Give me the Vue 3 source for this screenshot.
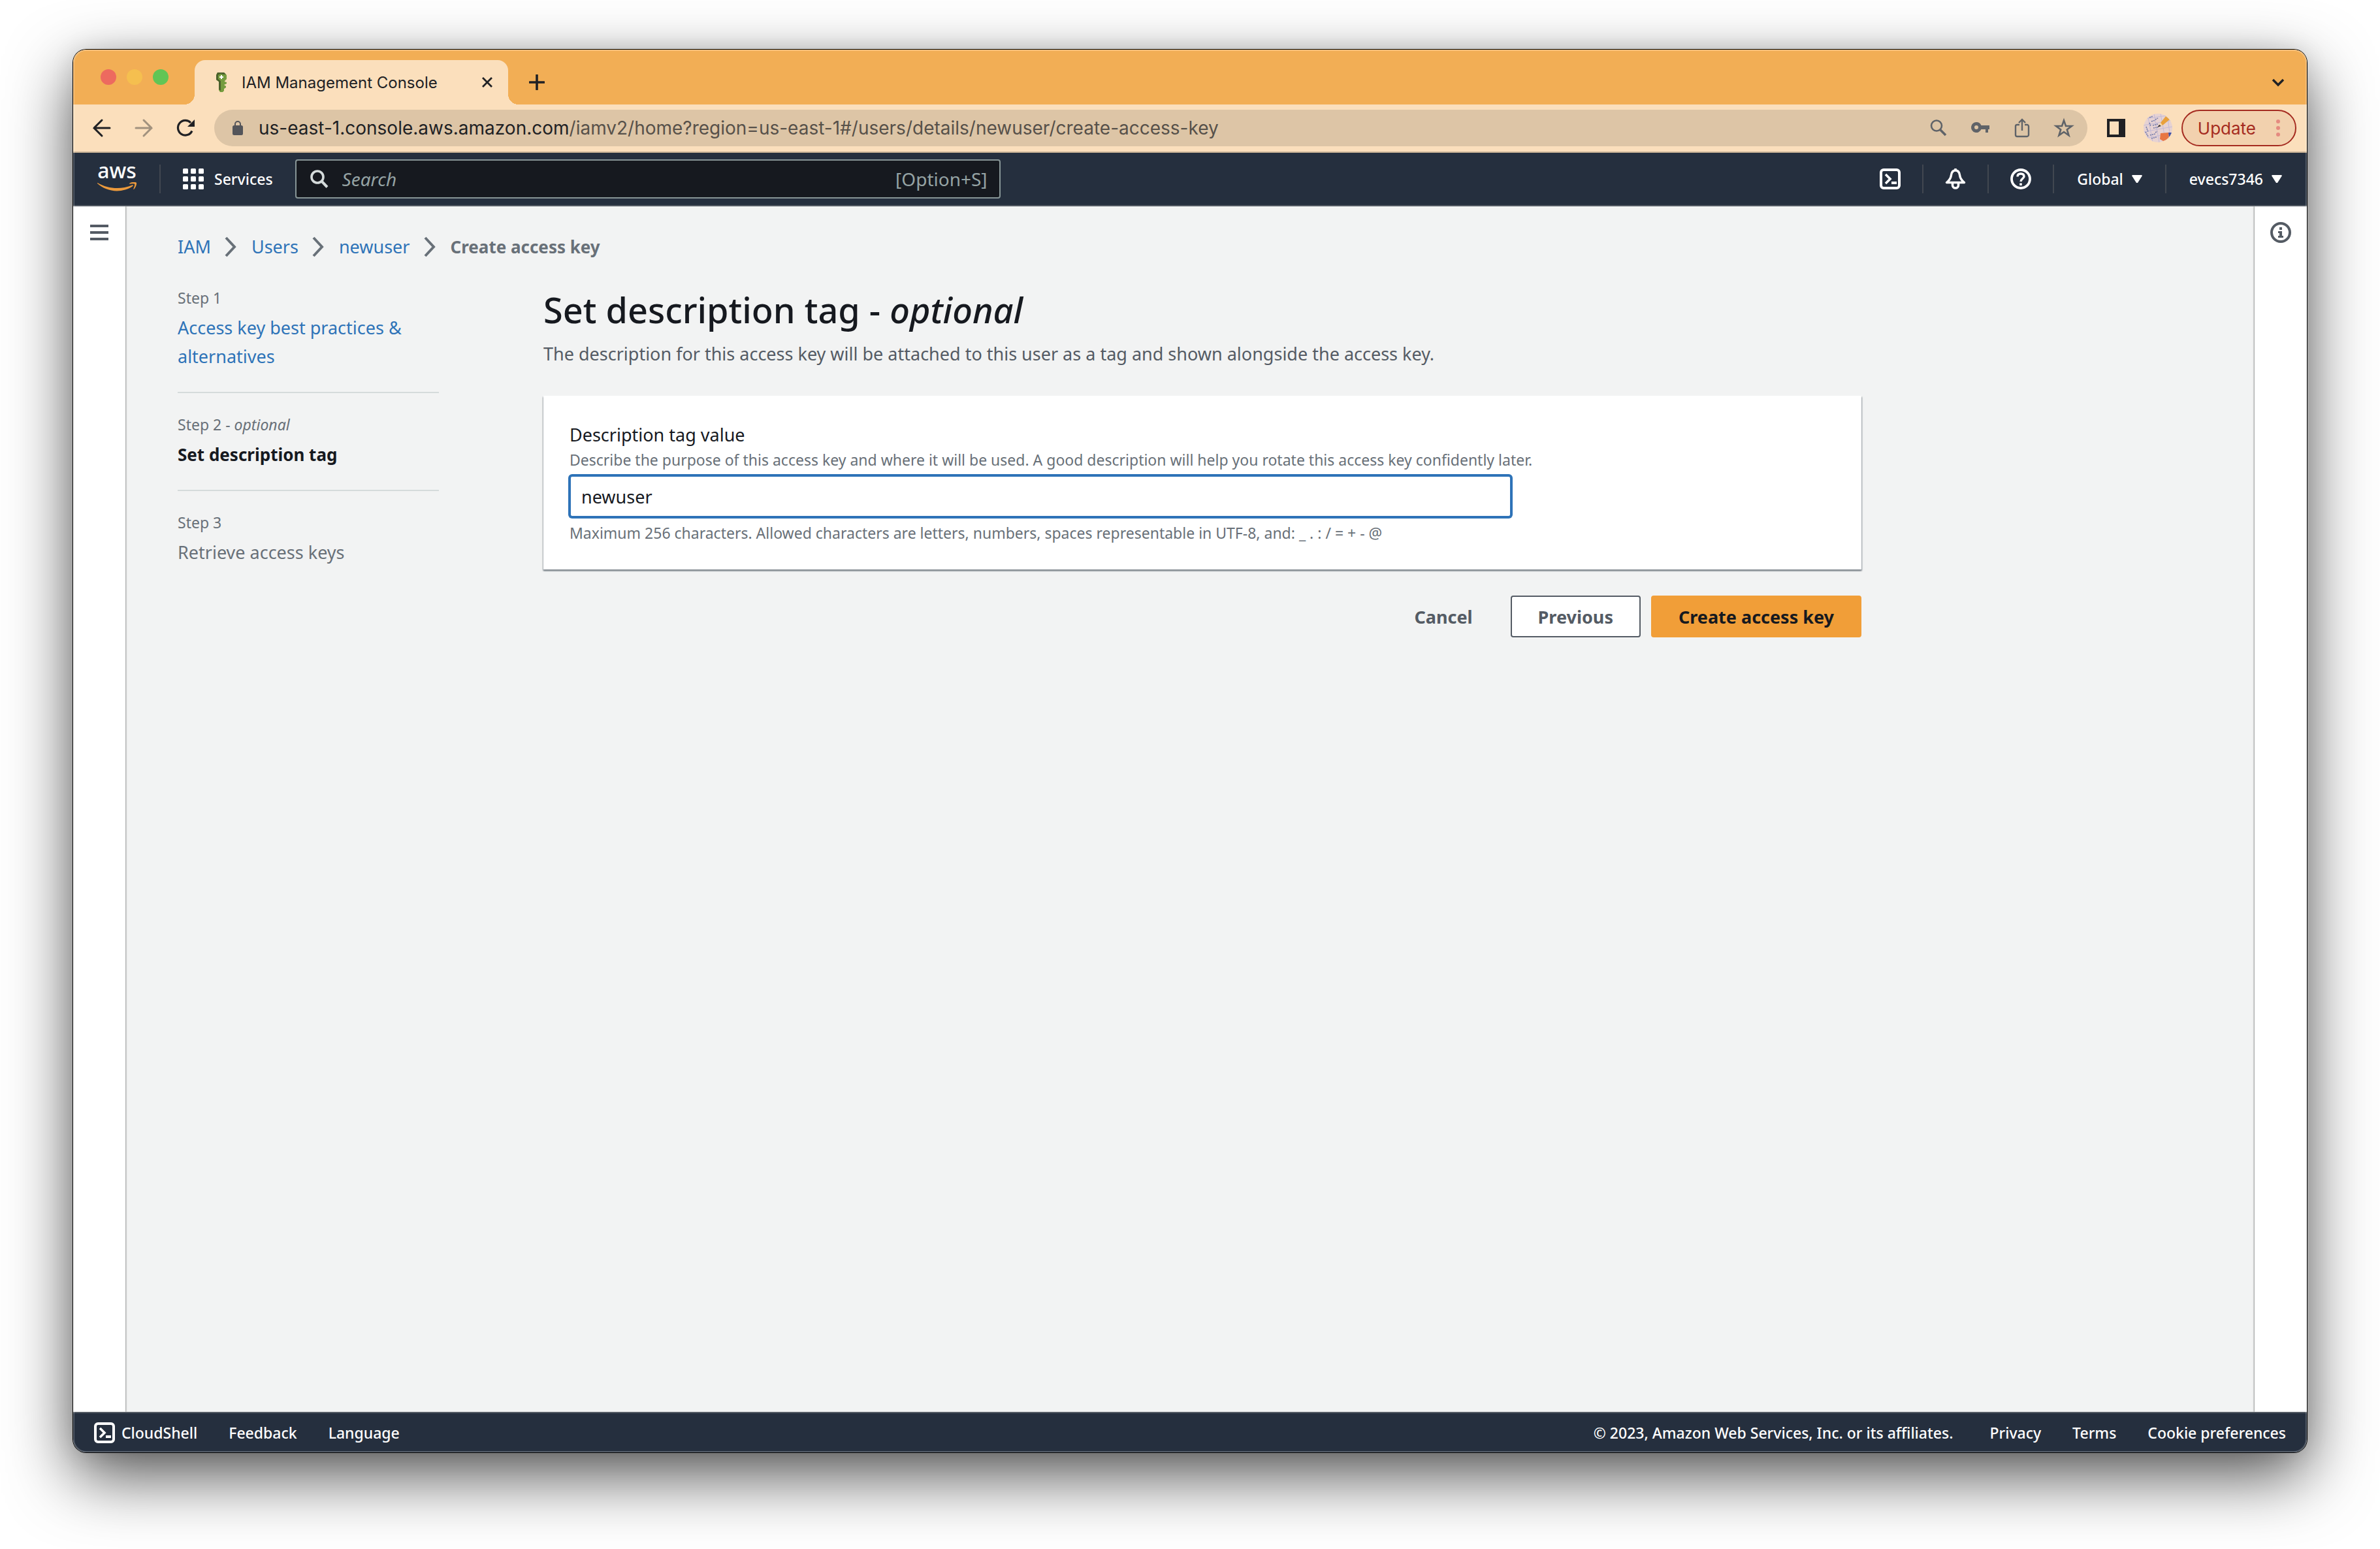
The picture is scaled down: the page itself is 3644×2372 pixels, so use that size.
<script setup>
import { ref } from 'vue'

const description = ref('newuser')
const query = ref('')

const crumbs = ['IAM', 'Users', 'newuser']

const steps = [
  { label: 'Step 1', title: 'Access key best practices & alternatives', state: 'done' },
  { label: 'Step 2', optional: true, title: 'Set description tag', state: 'current' },
  { label: 'Step 3', title: 'Retrieve access keys', state: 'next' },
]

const legalLinks = ['Privacy', 'Terms', 'Cookie preferences']
</script>

<template>
  <div class="desktop">
    <div class="window">
      <header class="tab-strip">
        <div class="lights">
          <button class="light close" aria-label="Close window"></button>
          <button class="light minimise" aria-label="Minimise window"></button>
          <button class="light zoom" aria-label="Zoom window"></button>
        </div>
        <div class="tab">
          <svg class="icon-32" viewBox="0 0 32 32" aria-hidden="true">
            <path d="M11 1h10l4 4v6l-3 3v1l3 1v2l-4 2 3 2v2l-3 2v3l-2 2h-4l-2-3V15l-4-3V5z" fill="#759c3e" />
            <path d="M11 1h10l3 3h-5l-3-1-4 2v6l4 3v15l-3-2V15l-4-3V5z" fill="#4b612c" />
            <path d="M16 5h2v2h2v2h-2v2h-2v-2h-2V7h2z" fill="#fff" />
          </svg>
          <span class="tab-title">IAM Management Console</span>
          <button class="plain" aria-label="Close tab">
            <svg class="icon-16" viewBox="0 0 16 16"><path d="M1 1l14 14M15 1L1 15" stroke="#202124" stroke-width="2.8" /></svg>
          </button>
        </div>
        <button class="plain new-tab" aria-label="New tab">
          <svg class="icon-24" viewBox="0 0 24 24"><path d="M12 1v22M1 12h22" stroke="#202124" stroke-width="3.6" stroke-linecap="round" /></svg>
        </button>
        <button class="plain tab-search" aria-label="Search tabs">
          <svg class="icon-20" viewBox="0 0 20 20"><path d="M2 6l8 8 8-8" fill="none" stroke="#202124" stroke-width="3.4" /></svg>
        </button>
      </header>

      <div class="toolbar">
        <nav class="history" aria-label="History">
          <button class="plain" aria-label="Back">
            <svg class="icon-32" viewBox="0 0 32 32"><path d="M28 16H4M16 4L4 16l12 12" fill="none" stroke="#202124" stroke-width="3" stroke-linecap="round" /></svg>
          </button>
          <button class="plain faded" aria-label="Forward">
            <svg class="icon-32" viewBox="0 0 32 32"><path d="M4 16h24M16 4l12 12-12 12" fill="none" stroke="#202124" stroke-width="3" stroke-linecap="round" /></svg>
          </button>
          <button class="plain" aria-label="Reload">
            <svg class="icon-32" viewBox="0 0 32 32"><path d="M26 20.500A11.300 11.300 0 1 1 24 8" fill="none" stroke="#202124" stroke-width="3.200" /><path d="M30 3v11H19z" fill="#202124" /></svg>
          </button>
        </nav>
        <div class="omnibox">
          <svg class="lock" viewBox="0 0 16 22" aria-hidden="true"><rect y="7" width="16" height="15" rx="2.500" fill="#54555a" /><path d="M4 8V5a4 4 0 0 1 8 0v3" fill="none" stroke="#54555a" stroke-width="2" /></svg>
          <div class="url"><span class="host">us-east-1.console.aws.amazon.com</span>/iamv2/home?region=us-east-1#/users/details/newuser/create-access-key</div>
          <button class="plain" aria-label="Zoom level">
            <svg class="icon-32" viewBox="0 0 32 32"><circle cx="13" cy="12.500" r="8" fill="none" stroke="#5f6368" stroke-width="2.600" /><path d="M18.500 18.500l8.500 8.500" stroke="#5f6368" stroke-width="3.600" /></svg>
          </button>
          <button class="plain" aria-label="Saved passwords">
            <svg class="icon-32" viewBox="0 0 32 32"><path fill="#5f6368" fill-rule="evenodd" d="M10 7a8 8 0 1 0 7.400 11H24v5h4v-5h2v-6H17.400A8 8 0 0 0 10 7zm0 5a3 3 0 1 1 0 6 3 3 0 0 1 0-6z" /></svg>
          </button>
          <button class="plain" aria-label="Share">
            <svg class="icon-32" viewBox="0 0 32 32"><path d="M12 11H8.500A2.500 2.500 0 0 0 6 13.500v13A2.500 2.500 0 0 0 8.500 29h15a2.500 2.500 0 0 0 2.500-2.500v-13A2.500 2.500 0 0 0 23.500 11H20M16 20V3M11 8l5-5 5 5" fill="none" stroke="#5f6368" stroke-width="2.400" /></svg>
          </button>
          <button class="plain" aria-label="Bookmark">
            <svg class="icon-32" viewBox="0 0 32 32"><path d="M16 4.500l3 8.500h9l-7.200 5.400 2.700 8.900L16 22l-7.500 5.300 2.700-8.900L4 13h9z" fill="none" stroke="#5f6368" stroke-width="2.600" /></svg>
          </button>
        </div>
        <button class="plain side-panel" aria-label="Side panel">
          <svg class="icon-28" viewBox="0 0 28 28"><path fill="#202124" fill-rule="evenodd" d="M0 0h28v28H0zM4 4v20h14V4z" /></svg>
        </button>
        <button class="plain avatar" aria-label="Profile">
          <svg viewBox="0 0 44 44">
            <defs><clipPath id="face"><circle cx="22" cy="22" r="22" /></clipPath></defs>
            <g clip-path="url(#face)">
              <rect width="44" height="44" fill="#e6d2d2" />
              <path d="M0 8l44-6M0 18l44-8M0 28l44-8M0 38l44-8M6 0l8 44M16 0l8 44M26 0l8 44M36 0l6 44" stroke="#c3bad6" stroke-width="1" />
              <path d="M9 6l5-2M12 12l6-2M4 20l3 8M14 18l8-2M15 22l7-1M3 28l4 7M10 33l8-2M18 29l3-2M12 38l8-2M18 9l4-2M9 14l2 5" stroke="#7078a8" stroke-width="1.600" stroke-dasharray="2 1" />
              <path d="M26 14l8-10 6 5-11 9z" fill="#e9a13b" />
              <path d="M24 17l2-3 3 4-6 2z" fill="#f5d6a3" />
              <path d="M21 21l3-4 3 2z" fill="#30303a" />
              <path d="M38 29h6v8l-5 2z" fill="#4053a5" />
              <path d="M26 30l12-1 1 10-9 3-5-3z" fill="#e87643" />
            </g>
          </svg>
        </button>
        <button class="update">
          Update
          <svg class="dots" viewBox="0 0 6 26" aria-hidden="true"><circle cx="3" cy="3" r="3" /><circle cx="3" cy="13" r="3" /><circle cx="3" cy="23" r="3" /></svg>
        </button>
      </div>

      <nav class="aws-nav" aria-label="Console">
        <a class="aws-logo" href="#">
          <span>aws</span>
          <svg viewBox="0 114 304 70" aria-hidden="true"><path fill="#ec9a3c" d="M273.500 143.700c-32.900 24.300-80.700 37.200-121.800 37.200-57.600 0-109.500-21.300-148.700-56.700-3.100-2.800-.3-6.600 3.400-4.400 42.400 24.600 94.700 39.500 148.800 39.500 36.500 0 76.600-7.600 113.500-23.200 5.500-2.500 10.200 3.600 4.800 7.600zM287.200 128.100c-4.200-5.400-27.800-2.600-38.500-1.300-3.200.4-3.700-2.400-.8-4.500 18.800-13.200 49.700-9.400 53.300-5 3.600 4.500-1 35.400-18.600 50.200-2.700 2.300-5.300 1.100-4.100-1.900 4-9.900 12.900-32.200 8.700-37.500z" /></svg>
        </a>
        <span class="rule"></span>
        <button class="plain services">
          <svg class="icon-32" viewBox="0 0 32 32" aria-hidden="true"><g fill="#fff"><template v-for="y in [0, 12, 24]" :key="y"><rect v-for="x in [0, 12, 24]" :key="x" :x="x" :y="y" width="8" height="8" rx="1.500" /></template></g></svg>
          Services
        </button>
        <label class="search">
          <svg class="icon-28" viewBox="0 0 28 28" aria-hidden="true"><circle cx="11" cy="11" r="9" fill="none" stroke="#d5dbdb" stroke-width="3.600" /><path d="M17 17l9 9.500" stroke="#d5dbdb" stroke-width="4" /></svg>
          <input v-model="query" type="text" placeholder="Search" aria-label="Search" />
          <span>[Option+S]</span>
        </label>
        <div class="nav-tools">
          <button class="plain" aria-label="CloudShell">
            <svg class="icon-32" viewBox="0 0 32 32"><rect x="2" y="2" width="28" height="28" rx="4" fill="none" stroke="#fff" stroke-width="4" /><path d="M9 9l7 7-7 7" fill="none" stroke="#fff" stroke-width="3.600" /><path d="M18 22h8" stroke="#fff" stroke-width="4" /></svg>
          </button>
          <span class="rule"></span>
          <button class="plain" aria-label="Notifications">
            <svg class="icon-32" viewBox="0 0 32 32"><path d="M16 3c-4 0-6 3.500-6.500 7-.6 5-2.500 8-7 11.500h27c-4.500-3.500-6.400-6.500-7-11.500-.5-3.500-2.500-7-6.500-7z" fill="none" stroke="#fff" stroke-width="3.400" stroke-linejoin="round" /><path d="M11.500 23v2.500a4.500 4.500 0 0 0 9 0V23M16 0v4" fill="none" stroke="#fff" stroke-width="3.600" /></svg>
          </button>
          <span class="rule"></span>
          <button class="plain" aria-label="Support">
            <svg class="icon-32" viewBox="0 0 32 32"><circle cx="16" cy="16" r="14" fill="none" stroke="#fff" stroke-width="3.800" /><path d="M11 12.500c0-3 2-4.500 5-4.500s5 1.500 5 4.300c0 3-5 3.700-5 7.700" fill="none" stroke="#fff" stroke-width="3.400" /><path d="M14.200 22.500h3.600V26h-3.600z" fill="#fff" /></svg>
          </button>
          <span class="rule"></span>
          <button class="plain menu">Global <svg class="caret" viewBox="0 0 16 12" aria-hidden="true"><path d="M1 0h14l1 1-7 11H7L0 1z" fill="#fff" /></svg></button>
          <span class="rule"></span>
          <button class="plain menu">evecs7346 <svg class="caret" viewBox="0 0 16 12" aria-hidden="true"><path d="M1 0h14l1 1-7 11H7L0 1z" fill="#fff" /></svg></button>
        </div>
      </nav>

      <div class="body">
        <aside class="rail left">
          <button class="plain" aria-label="Open navigation">
            <svg class="icon-28" viewBox="0 0 28 28"><path d="M0 4h28M0 14h28M0 24h28" stroke="#545b64" stroke-width="4" /></svg>
          </button>
        </aside>

        <main class="content">
          <nav class="breadcrumbs" aria-label="Breadcrumbs">
            <template v-for="crumb in crumbs" :key="crumb">
              <a href="#">{{ crumb }}</a>
              <svg viewBox="0 0 20 32" aria-hidden="true"><path d="M2 2l13 14L2 30" fill="none" stroke="#687078" stroke-width="4" /></svg>
            </template>
            <strong>Create access key</strong>
          </nav>

          <div class="wizard">
            <ol class="steps">
              <li v-for="step in steps" :key="step.label" :class="step.state">
                <small>{{ step.label }}<template v-if="step.optional"> - <i>optional</i></template></small>
                <a v-if="step.state === 'done'" href="#">{{ step.title }}</a>
                <span v-else>{{ step.title }}</span>
              </li>
            </ol>

            <form class="form" @submit.prevent>
              <h1>Set description tag - <i>optional</i></h1>
              <p class="lead">The description for this access key will be attached to this user as a tag and shown alongside the access key.</p>
              <section class="card">
                <label for="tag-value">Description tag value</label>
                <p id="tag-help">Describe the purpose of this access key and where it will be used. A good description will help you rotate this access key confidently later.</p>
                <input id="tag-value" v-model="description" type="text" aria-describedby="tag-help tag-limit" />
                <p id="tag-limit">Maximum 256 characters. Allowed characters are letters, numbers, spaces representable in UTF-8, and: _ . : / = + - @</p>
              </section>
              <div class="actions">
                <button type="button" class="btn link">Cancel</button>
                <button type="button" class="btn normal">Previous</button>
                <button type="submit" class="btn primary">Create access key</button>
              </div>
            </form>
          </div>
        </main>

        <aside class="rail right">
          <button class="plain" aria-label="Open info panel">
            <svg class="icon-32" viewBox="0 0 32 32"><circle cx="16" cy="16" r="14" fill="none" stroke="#545b64" stroke-width="4" /><path d="M14 8h4v4h-4zM12 14h6v7h2v3h-8v-3h2v-4h-2z" fill="#545b64" /></svg>
          </button>
        </aside>
      </div>

      <footer class="footer">
        <button class="plain shell">
          <svg class="icon-32" viewBox="0 0 32 32" aria-hidden="true"><rect x="2" y="2" width="28" height="28" rx="4" fill="none" stroke="#fff" stroke-width="4" /><path d="M9 9l7 7-7 7" fill="none" stroke="#fff" stroke-width="3.600" /><path d="M18 22h8" stroke="#fff" stroke-width="4" /></svg>
          CloudShell
        </button>
        <a href="#">Feedback</a>
        <button class="plain">Language</button>
        <span class="copyright">© 2023, Amazon Web Services, Inc. or its affiliates.</span>
        <a v-for="link in legalLinks" :key="link" href="#">{{ link }}</a>
      </footer>
    </div>
  </div>
</template>

<style>
body {
  margin: 0;
  background: #fff;
}
</style>

<style scoped>
* {
  box-sizing: border-box;
}

.desktop {
  display: flex;
  min-height: 100vh;
  padding: 76px 112px 148px;
  font-family: "Noto Sans", "Open Sans", sans-serif;
  color: #16191f;
}

.window {
  position: relative;
  display: flex;
  flex: 1;
  flex-direction: column;
  min-width: 0;
  border-radius: 20px;
  background: #f2f3f3;
  box-shadow: 0 0 0 1px #000, 0 36px 100px rgba(0, 0, 0, 0.68), 0 0 36px rgba(0, 0, 0, 0.1);
}

/* light rim along the inside of the window edge */
.window::after {
  content: "";
  position: absolute;
  inset: 0;
  border-radius: inherit;
  box-shadow: inset 0 0 0 2px rgba(255, 255, 255, 0.22);
  pointer-events: none;
}

a {
  color: #2e73b8;
  text-decoration: none;
}

svg {
  display: block;
  flex: none;
}

button {
  font-family: inherit;
  white-space: nowrap;
}

.plain {
  display: flex;
  align-items: center;
  flex: none;
  padding: 0;
  border: 0;
  background: none;
  color: inherit;
  font-size: inherit;
  font-weight: inherit;
}

.icon-16 { width: 16px; height: 16px; }
.icon-20 { width: 20px; height: 20px; }
.icon-24 { width: 24px; height: 24px; }
.icon-28 { width: 28px; height: 28px; }
.icon-32 { width: 32px; height: 32px; }

/* Browser tabs */
.tab-strip {
  display: flex;
  align-items: flex-end;
  height: 84px;
  padding: 0 34px 0 42px;
  border-radius: 20px 20px 0 0;
  background: #f2ae55;
  font-family: Inter, Roboto, sans-serif;
}

.lights {
  display: flex;
  align-self: center;
  gap: 16px;
}

.light {
  width: 24px;
  height: 24px;
  padding: 0;
  border: 0;
  border-radius: 50%;
}

.close { background: #ed6a5f; }
.minimise { background: #f5bf4f; }
.zoom { background: #61c555; }

.tab {
  position: relative;
  display: flex;
  align-items: center;
  gap: 16px;
  width: 480px;
  height: 68px;
  margin-left: 40px;
  padding: 0 24px;
  border-radius: 16px 16px 0 0;
  background: #fbdfbc;
  font-size: 24px;
  color: #202124;
}

.tab::before,
.tab::after {
  content: "";
  position: absolute;
  bottom: 0;
  width: 16px;
  height: 16px;
}

.tab::before {
  right: 100%;
  background: radial-gradient(circle at 0 0, transparent 16px, #fbdfbc 16px);
}

.tab::after {
  left: 100%;
  background: radial-gradient(circle at 100% 0, transparent 16px, #fbdfbc 16px);
}

.tab-title {
  flex: 1;
  white-space: nowrap;
}

.new-tab {
  height: 68px;
  margin-left: 32px;
}

.tab-search {
  height: 68px;
  margin-left: auto;
}

/* Browser toolbar */
.toolbar {
  display: flex;
  align-items: center;
  height: 74px;
  padding: 0 16px 0 28px;
  border-bottom: 2px solid #c8b296;
  background: #fbdfbc;
  font-family: Inter, Roboto, sans-serif;
}

.history {
  display: flex;
  gap: 32px;
  margin-right: 28px;
}

.faded {
  opacity: 0.4;
}

.omnibox {
  display: flex;
  flex: 1;
  align-items: center;
  gap: 32px;
  min-width: 0;
  height: 56px;
  padding: 0 20px 0 28px;
  border-radius: 28px;
  background: #ddc5a6;
}

.lock {
  width: 16px;
  height: 22px;
  margin-right: -8px;
}

.url {
  flex: 1;
  min-width: 0;
  overflow: hidden;
  font-size: 28px;
  line-height: 40px;
  color: #57514a;
  white-space: nowrap;
}

.host {
  color: #202124;
}

.side-panel {
  margin: 0 28px 0 30px;
}

.avatar {
  width: 44px;
  height: 44px;
}

.avatar svg {
  width: 100%;
  height: 100%;
}

.update {
  display: flex;
  flex: none;
  align-items: center;
  gap: 31px;
  height: 56px;
  margin-left: 14px;
  padding: 0 23px;
  border: 2px solid #a52b20;
  border-radius: 28px;
  background: #f2d1ae;
  color: #a52b20;
  font-size: 26px;
}

.dots {
  width: 6px;
  height: 26px;
  fill: #e58a80;
}

/* AWS header */
.aws-nav {
  display: flex;
  align-items: center;
  height: 82px;
  padding: 0 36px;
  border-bottom: 2px solid #545b64;
  background: #252f3e;
  color: #fff;
  font-size: 23px;
  font-weight: 500;
}

.aws-logo {
  display: flex;
  flex: none;
  flex-direction: column;
  align-items: center;
  gap: 6px;
  width: 62px;
  padding-bottom: 6px;
  color: #fff;
  font-size: 32px;
  line-height: 24px;
}

.aws-logo svg {
  width: 62px;
  height: 14px;
}

.rule {
  flex: none;
  width: 2px;
  height: 44px;
  background: #414750;
}

.aws-logo + .rule {
  margin: 0 34px;
}

.services {
  gap: 16px;
  margin-right: 34px;
}

.search {
  display: flex;
  flex: 0 1 1080px;
  align-items: center;
  gap: 21px;
  min-width: 0;
  height: 60px;
  padding: 0 18px 0 21px;
  border: 2px solid #879596;
  border-radius: 4px;
  background: #16191f;
  color: #95a3a4;
  font-size: 28px;
  font-weight: 400;
}

.search input {
  flex: 1;
  min-width: 0;
  padding: 0;
  border: 0;
  outline: 0;
  background: none;
  color: #fff;
  font: inherit;
}

.search input::placeholder {
  color: #95a3a4;
  font-style: italic;
  opacity: 1;
}

.nav-tools {
  display: flex;
  align-items: center;
  gap: 33px;
  margin-left: auto;
}

.menu {
  gap: 13px;
  padding: 0 2px;
}

.caret {
  width: 16px;
  height: 12px;
}

/* Page body */
.body {
  display: flex;
  flex: 1;
}

.rail {
  z-index: 1;
  display: flex;
  flex: none;
  justify-content: center;
  align-items: flex-start;
  width: 80px;
  padding-top: 24px;
  background: #fff;
}

.left {
  padding-top: 26px;
  box-shadow: 1px 0 2px rgba(0, 0, 0, 0.4);
  clip-path: inset(0 -4px 0 0);
}

.right {
  box-shadow: -1px 0 2px rgba(0, 0, 0, 0.4);
  clip-path: inset(0 0 0 -4px);
}

.content {
  flex: 1;
  min-width: 0;
  padding: 40px 80px;
  font-size: 27px;
  line-height: 44px;
}

.breadcrumbs {
  display: flex;
  align-items: center;
  color: #687078;
}

.breadcrumbs svg {
  width: 20px;
  height: 32px;
  margin: 0 21px;
}

.breadcrumbs strong {
  font-size: 26px;
  font-weight: 700;
}

.wizard {
  display: grid;
  grid-template-columns: 400px minmax(0, 2018px);
  column-gap: 160px;
  margin-top: 38px;
}

.steps {
  margin: 0;
  padding: 2px 0 0;
  list-style: none;
  color: #687078;
}

.steps li {
  display: flex;
  flex-direction: column;
  gap: 8px;
  padding: 32px 0;
  border-bottom: 2px solid #d5dbdb;
}

.steps li:first-child {
  padding-top: 0;
}

.steps li:last-child {
  border-bottom: 0;
}

.steps small {
  font-size: 23px;
  line-height: 32px;
}

.current span {
  color: #16191f;
  font-size: 26px;
  font-weight: 700;
}

h1 {
  margin: 0 0 10px;
  font-size: 54px;
  font-weight: 500;
  line-height: 72px;
}

.lead {
  margin: 0;
  color: #545b64;
}

.card {
  margin: 42px 0 40px;
  padding: 40px 40px 38px;
  background: #fff;
  box-shadow: 0 2px 2px #81878f, 1px 2px 2px rgba(0, 28, 36, 0.3), -1px 2px 2px rgba(0, 28, 36, 0.2);
}

.card label {
  display: block;
  line-height: 40px;
}

.card p {
  margin: 0;
  color: #687078;
  font-size: 23px;
  line-height: 36px;
}

.card input {
  display: block;
  width: calc(75% - 12px);
  height: 64px;
  margin: 6px 0;
  padding: 0 16px;
  border: 2px solid #2e73b8;
  border-radius: 4px;
  outline: 0;
  box-shadow: 0 0 0 2px #2e73b8;
  background: #fff;
  color: #16191f;
  font-family: inherit;
  font-size: 27px;
}

.actions {
  display: flex;
  justify-content: flex-end;
  gap: 16px;
}

.btn {
  height: 64px;
  padding: 0 40px;
  border: 2px solid transparent;
  border-radius: 4px;
  color: #545b64;
  font-size: 27px;
  font-weight: 700;
}

.link {
  background: none;
}

.normal {
  border-color: #545b64;
  background: #fff;
}

.primary {
  background: #f19e38;
  border-color: #f19e38;
  color: #16191f;
}

/* Footer */
.footer {
  display: flex;
  align-items: center;
  gap: 48px;
  height: 62px;
  padding: 0 32px;
  border-top: 2px solid #545b64;
  border-radius: 0 0 20px 20px;
  background: #252f3e;
  color: #fff;
  font-size: 23px;
  font-weight: 500;
  white-space: nowrap;
}

.footer a {
  color: #fff;
}

.shell {
  gap: 10px;
}

.copyright {
  margin: 0 8px 0 auto;
}
</style>
